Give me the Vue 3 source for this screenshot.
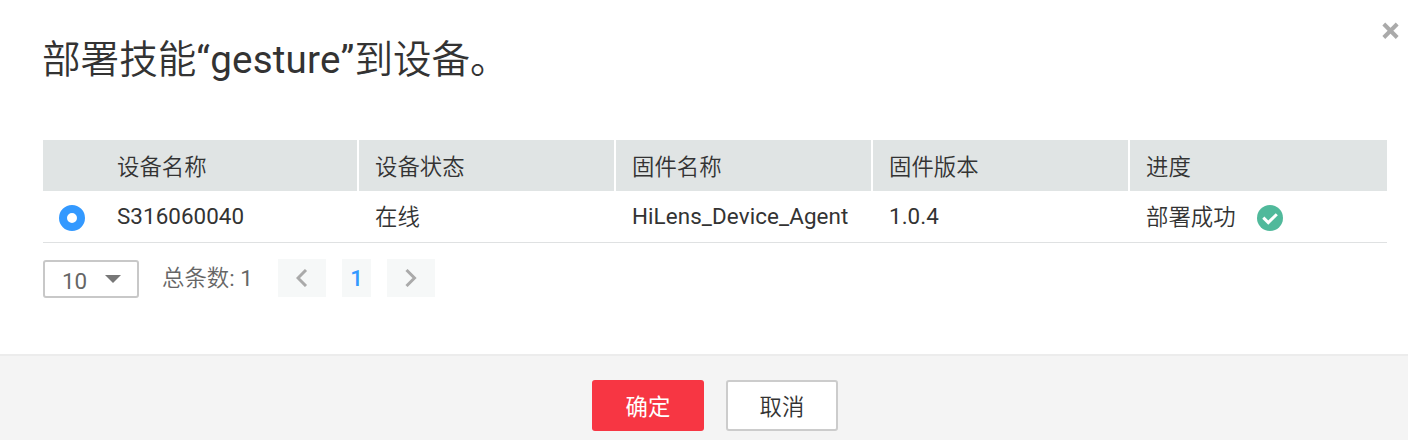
<script setup>
const columns = ['设备名称', '设备状态', '固件名称', '固件版本', '进度']
</script>

<template>
  <main class="dialog">
    <header class="heading">
      <h1>部署技能<span class="skill">“gesture”</span>到设备。</h1>
      <button class="close" aria-label="关闭"><svg width="18" height="18" viewBox="0 0 18 18"><path d="M1.8 2L15.2 15.5M15.2 2L1.8 15.5" /></svg></button>
    </header>
    <section class="table">
      <div class="row head"><span v-for="c in columns" :key="c" class="cell"><span>{{ c }}</span></span></div>
      <div class="row body">
        <span class="cell latin"><i class="radio"></i><span>S316060040</span></span>
        <span class="cell">在线</span>
        <span class="cell latin agent">HiLens_Device_Agent</span>
        <span class="cell latin">1.0.4</span>
        <span class="cell">部署成功<svg class="ok" width="26" height="26" viewBox="0 0 26 26"><circle cx="13" cy="13" r="13" /><path d="M6.3 12.6L11.3 17.6L19.8 9.2" /></svg></span>
      </div>
    </section>
    <nav class="pager">
      <button class="size"><span>10</span><svg width="16" height="8" viewBox="0 0 16 8"><path d="M0 0H16L8 8Z" /></svg></button>
      <span class="total">总条数: 1</span>
      <button class="arrow"><svg width="12" height="18" viewBox="0 0 12 18"><path d="M10 1L2 9L10 17" /></svg></button>
      <button class="page">1</button>
      <button class="arrow"><svg width="12" height="18" viewBox="0 0 12 18"><path d="M1.5 1L9.5 9L1.5 17" /></svg></button>
    </nav>
    <footer class="footer"><button class="confirm">确定</button><button class="cancel">取消</button></footer>
  </main>
</template>

<style>
body { margin: 0; background: #fff; }
</style>

<style scoped>
.dialog { width: 1408px; height: 440px; display: flex; flex-direction: column; overflow: hidden; font-family: Roboto, "Noto Sans CJK SC DemiLight", "Noto Sans CJK SC", sans-serif; font-size: 22.4px; color: #333; font-weight: 400; }
button { font: inherit; color: inherit; margin: 0; padding: 0; border: 0; box-sizing: border-box; }
.heading { height: 140px; padding: 0 8px 0 42px; box-sizing: border-box; display: flex; justify-content: space-between; flex: none; }
h1 { margin: 30px 0 0; font-size: 38.6px; line-height: 60px; font-weight: 400; white-space: nowrap; }
.skill { letter-spacing: 0.2px; }
.close { background: none; width: 18px; height: 18px; margin-top: 22px; }
svg { display: block; fill: none; }
.close path { stroke: #aaa; stroke-width: 4; }
.table { margin: 0 21px 0 43px; flex: none; }
.row { display: grid; grid-template-columns: 316px 257px 257px 257px 257px; }
.cell { display: flex; align-items: center; padding-left: 16px; padding-bottom: 2px; white-space: nowrap; box-sizing: border-box; }
.head { height: 51px; background: #e0e4e4; }
.head .cell:first-child { padding-left: 74px; }
.head .cell:not(:last-child) { border-right: 2px solid #fff; }
.body { height: 52px; border-bottom: 1px solid #dfe1e2; box-sizing: border-box; }
.body .cell { padding-bottom: 3px; }
.body .latin { padding-bottom: 1px; letter-spacing: 0.06px; }
.body .agent { letter-spacing: 0.1px; }
.radio { width: 26px; height: 26px; border: 8px solid #3399ff; border-radius: 50%; box-sizing: border-box; margin-right: 32px; margin-top: 3px; }
.ok { margin-left: 21.4px; margin-top: 5px; }
.ok circle { fill: #50b99b; }
.ok path { stroke: #fff; stroke-width: 3; }
.pager { display: flex; margin: 16px 0 0 43px; height: 40px; color: #666; flex: none; }
.size { width: 96px; height: 38px; margin-top: 1px; background: #fff; border: 2px solid #c8c8c8; border-radius: 3px; display: flex; align-items: center; justify-content: space-between; padding: 3px 16px 0 17px; }
.size svg { fill: #777; margin-top: -3px; }
.total { width: 92px; margin: 0 24px 0 23px; line-height: 39px; white-space: nowrap; }
.arrow { width: 48px; height: 38px; background: #f6f8f8; display: flex; align-items: center; justify-content: center; }
.arrow path { stroke: #aaa; stroke-width: 3; }
.page { width: 29px; height: 38px; background: #f6f8f8; color: #3399ff; margin: 0 16px; font-weight: 500; }
.footer { height: 86px; box-sizing: border-box; border-top: 2px solid #ececec; background: #f4f4f4; margin-top: auto; padding: 24px 0 0 592px; display: flex; gap: 22px; flex: none; }
.footer button { width: 112px; height: 51px; border-radius: 3px; padding-bottom: 2px; }
.footer .confirm { background: #f73643; color: #fff; font-family: "Noto Sans CJK SC", sans-serif; }
.cancel { background: #fff; border: 2px solid #ccc; }
</style>
